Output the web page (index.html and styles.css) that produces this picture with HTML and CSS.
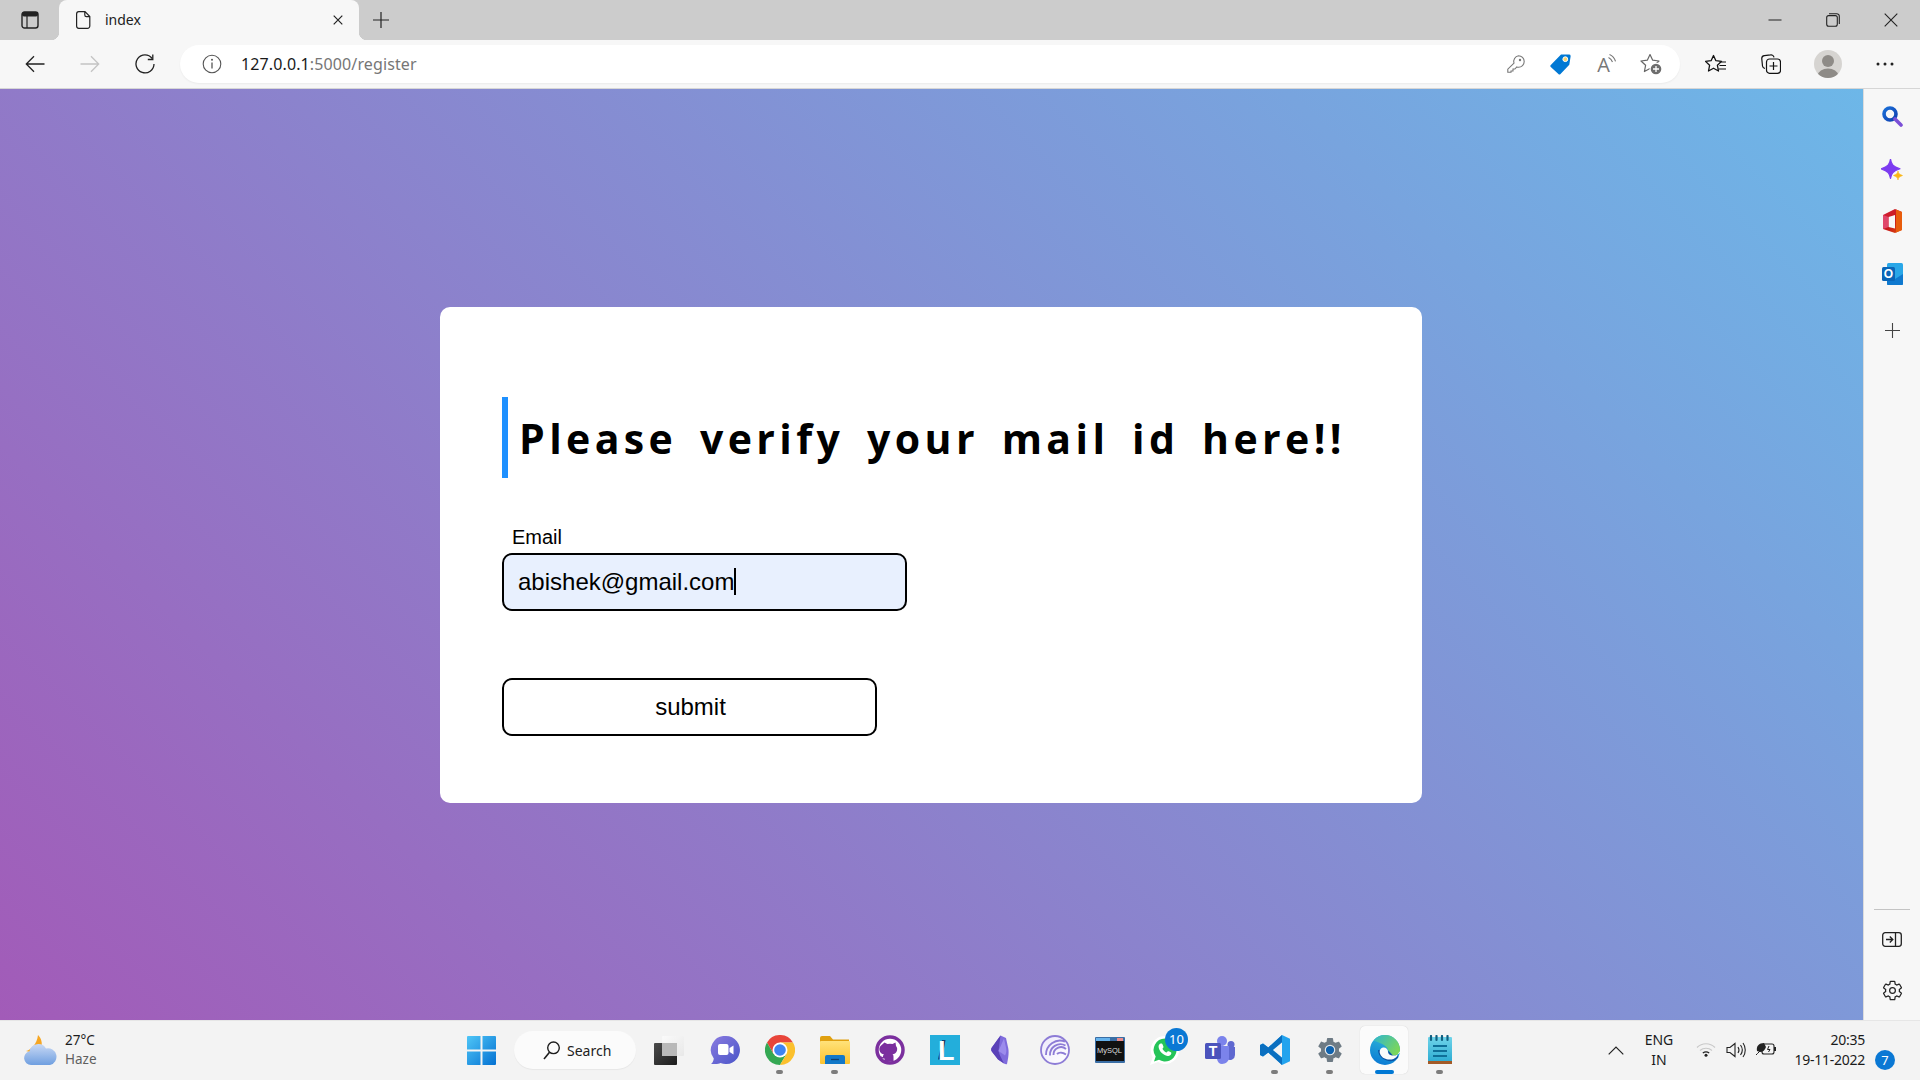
FILE: index.html
```html
<!DOCTYPE html>
<html lang="en">
<head>
<meta charset="utf-8">
<title>index</title>
<link rel="stylesheet" href="styles.css">
</head>
<body>
<div class="window">
  <header class="tabstrip">
    <div class="tab-toggle">
      <svg width="18" height="18" viewBox="0 0 18 18"><rect x="1" y="1" width="16" height="16" rx="2.5" fill="none" stroke="#222" stroke-width="1.4"/><rect x="1" y="1" width="16" height="4.5" rx="2" fill="#222"/><path d="M6 5v12" stroke="#222" stroke-width="1.2"/></svg>
    </div>
    <div class="tab">
      <svg class="tab-file" width="16" height="18" viewBox="0 0 16 18"><path d="M3 .7h6.2L14 5.500V15a2.300 2.300 0 0 1-2.300 2.300H3A2.300 2.300 0 0 1 .8 15V3A2.300 2.300 0 0 1 3 .7zM9 .9V4a1.600 1.600 0 0 0 1.600 1.600H14" transform="translate(.8 0)" fill="none" stroke="#222" stroke-width="1.2"/></svg>
      <span class="tab-title">index</span>
      <svg class="tab-close" width="10" height="10" viewBox="0 0 10 10"><path d="M.7.7l8.600 8.600M9.300.7L.7 9.300" stroke="#222" stroke-width="1.2"/></svg>
    </div>
    <div class="new-tab">
      <svg width="18" height="18" viewBox="0 0 18 18"><path d="M9 1v16M1 9h16" stroke="#222" stroke-width="1.2"/></svg>
    </div>
    <div class="win-controls">
      <div class="win-btn"><svg width="14" height="14" viewBox="0 0 14 14"><path d="M.5 7h13" stroke="#222" stroke-width="1"/></svg></div>
      <div class="win-btn"><svg width="14" height="14" viewBox="0 0 14 14"><rect x=".7" y="2.600" width="10.600" height="10.600" rx="2" fill="none" stroke="#222" stroke-width="1.100"/><path d="M3 .7h7.600a2.600 2.600 0 0 1 2.700 2.700V11" fill="none" stroke="#222" stroke-width="1.100"/></svg></div>
      <div class="win-btn"><svg width="14" height="14" viewBox="0 0 14 14"><path d="M.7.7l12.600 12.600M13.300.7L.7 13.300" stroke="#222" stroke-width="1.100"/></svg></div>
    </div>
  </header>

  <nav class="toolbar">
    <div class="nav-btn"><svg width="20" height="18" viewBox="0 0 20 18"><path d="M19.500 9H1.500M9 1.200L1.300 9 9 16.800" fill="none" stroke="#222" stroke-width="1.300"/></svg></div>
    <div class="nav-btn"><svg width="20" height="18" viewBox="0 0 20 18"><path d="M.5 9h18M11 1.200L18.700 9 11 16.800" fill="none" stroke="#c4c4c4" stroke-width="1.300"/></svg></div>
    <div class="nav-btn"><svg width="20" height="20" viewBox="0 0 20 20"><path d="M17.200 4.500A9 9 0 1 0 19 10" fill="none" stroke="#222" stroke-width="1.300"/><path d="M17.800.5v5h-5" fill="none" stroke="#222" stroke-width="1.300"/></svg></div>
    <div class="address">
      <svg class="addr-info" width="20" height="20" viewBox="0 0 20 20"><circle cx="10" cy="10" r="8.800" fill="none" stroke="#555" stroke-width="1.100"/><path d="M10 8.500v6" stroke="#555" stroke-width="1.300"/><circle cx="10" cy="5.800" r="1" fill="#555"/></svg>
      <div class="addr-url"><span class="url-host">127.0.0.1</span>:5000/register</div>
      <div class="addr-icons">
        <div class="addr-slot"><svg width="18" height="18" viewBox="0 0 18 18"><path d="M11.500.8a5.700 5.700 0 0 1 0 11.400c-.6 0-1.200-.1-1.700-.3L7.900 14H6v2H4v1.300H.8v-3.100l6.200-6A5.700 5.700 0 0 1 11.500.8z" fill="none" stroke="#777" stroke-width="1.100"/><circle cx="13" cy="5" r="1.200" fill="#777"/></svg></div>
        <div class="addr-slot"><svg width="21" height="21" viewBox="0 0 21 21"><path d="M11 .6h8a1.600 1.600 0 0 1 1.600 1.800l-1.300 8.300-8.800 9.400a1.500 1.500 0 0 1-2.100 0L.8 13a1.500 1.500 0 0 1 0-2.100z" fill="#0078d4"/><circle cx="15.300" cy="5.200" r="2.400" fill="#f7d774" stroke="#fff" stroke-width="1"/></svg></div>
        <div class="addr-slot"><span class="read-a">A</span><svg class="read-waves" width="8" height="12" viewBox="0 0 8 12"><path d="M.5 3.500c2 .9 3.300 2.500 4 4.500M1.500.5c3 1.200 5 3.500 6 6.800" fill="none" stroke="#777" stroke-width="1.100"/></svg></div>
        <div class="addr-slot"><svg width="22" height="22" viewBox="0 0 22 22"><path d="M10 1.500l2.700 5.700 6.300.8-4.600 4.300 1.200 6.200-5.600-3-5.600 3 1.200-6.200L1 8l6.300-.8z" fill="none" stroke="#666" stroke-width="1.200" stroke-linejoin="round"/><circle cx="16" cy="16" r="6.500" fill="#fff"/><circle cx="16" cy="16" r="5.300" fill="#6d6d6d"/><path d="M16 13v6M13 16h6" stroke="#fff" stroke-width="1.300"/></svg></div>
      </div>
    </div>
    <div class="tool-right">
      <div class="tool-slot"><svg width="21" height="20" viewBox="0 0 21 20"><path d="M8.500 1.500l2.400 5.200 5.600.7-4.100 3.900 1.100 5.700-5-2.800-5 2.800 1.100-5.700L.5 7.400l5.600-.7z" fill="none" stroke="#111" stroke-width="1.300" stroke-linejoin="round"/><path d="M14.500 8H21M14.500 11.500H21M13.500 15H21" stroke="#111" stroke-width="1.200"/></svg></div>
      <div class="tool-slot"><svg width="20" height="20" viewBox="0 0 20 20"><path d="M4 14.500A3 3 0 0 1 1.500 12L.8 5a3 3 0 0 1 2.600-3.300L9.500.9A3 3 0 0 1 13 3.300" fill="none" stroke="#111" stroke-width="1.200"/><rect x="5.500" y="5" width="14" height="14.300" rx="3" fill="#f7f7f7" stroke="#111" stroke-width="1.200"/><path d="M12.500 8v8M8.500 12h8" stroke="#111" stroke-width="1.200"/></svg></div>
      <div class="tool-slot tool-avatar"><svg width="28" height="28" viewBox="0 0 28 28"><defs><clipPath id="av"><circle cx="14" cy="14" r="14"/></clipPath></defs><circle cx="14" cy="14" r="14" fill="#d6d4d1"/><g clip-path="url(#av)" fill="#8e8b87"><circle cx="14" cy="11" r="6"/><ellipse cx="14" cy="25" rx="10" ry="6.500"/></g></svg></div>
      <div class="tool-slot tool-more"><svg width="18" height="4" viewBox="0 0 18 4"><circle cx="2" cy="2" r="1.500" fill="#222"/><circle cx="9" cy="2" r="1.500" fill="#222"/><circle cx="16" cy="2" r="1.500" fill="#222"/></svg></div>
    </div>
  </nav>

  <div class="body-row">
    <main class="page">
      <section class="card">
        <h1 class="title">Please verify your mail id here!!</h1>
        <label class="field-label">Email</label>
        <div class="field"><span>abishek@gmail.com</span><i class="caret"></i></div>
        <button class="submit" type="button">submit</button>
      </section>
    </main>
    <aside class="sidebar">
      <div class="side-slot"><svg width="21" height="21" viewBox="0 0 21 21"><defs><linearGradient id="sg" x1="0" y1="0" x2="1" y2="1"><stop offset="0" stop-color="#1a6fd8"/><stop offset="1" stop-color="#0f3fb0"/></linearGradient></defs><circle cx="8" cy="8" r="6" fill="none" stroke="url(#sg)" stroke-width="3.600"/><path d="M13 13l6 6" stroke="#7b4fd6" stroke-width="3.600" stroke-linecap="round"/></svg></div>
      <div class="side-slot"><svg width="22" height="22" viewBox="0 0 22 22"><path d="M9.500 0c.8 5.500 2.500 7.500 9.500 9.800-7 2.300-8.700 4.300-9.500 9.700C8.700 14.100 7 12.100 0 9.800 7 7.500 8.700 5.500 9.500 0z" fill="#7c3bf0" stroke="#7c3bf0" stroke-width="1.200" stroke-linejoin="round"/><path d="M17 12c.4 2.400 1.200 3.200 4.500 4.500-3.300 1.300-4.100 2.100-4.500 4.500-.4-2.400-1.200-3.200-4.500-4.500 3.300-1.300 4.100-2.100 4.500-4.500z" fill="#fab615" stroke="#fab615" stroke-width=".6"/></svg></div>
      <div class="side-slot side-office"><svg width="21" height="24" viewBox="0 0 21 24"><defs><linearGradient id="of" x1="0" y1="0" x2="1" y2="1"><stop offset="0" stop-color="#d6203c"/><stop offset=".55" stop-color="#c81a1a"/><stop offset="1" stop-color="#e0540a"/></linearGradient></defs><path d="M1 6L13 0l7 3v18l-7 3-12-4z" fill="url(#of)"/><path d="M14 .5l6 2.500v18l-6 2.500z" fill="#e85c0c"/><path d="M6.500 8l6.500-2v13.500L6.500 18z" fill="#f7f7f7"/><path d="M1 6l5.500 2v10L1 20z" fill="#e0476b"/></svg></div>
      <div class="side-slot side-outlook"><svg width="21" height="22" viewBox="0 0 21 22"><rect x="5" y="0" width="16" height="22" rx="1.500" fill="#29a7e8"/><path d="M5 11l8 5 8-5v10a1 1 0 0 1-1 1H6a1 1 0 0 1-1-1z" fill="#0f79cf"/><rect x="0" y="4" width="13" height="14" rx="1.500" fill="#0a66b8"/><text x="6.500" y="15.300" class="svg-o">O</text></svg></div>
      <div class="side-slot"><svg width="15" height="15" viewBox="0 0 15 15"><path d="M7.500 0v15M0 7.500h15" stroke="#444" stroke-width="1.100"/></svg></div>
      <div class="side-bottom">
        <div class="side-line"></div>
        <div class="side-slot side-panel"><svg width="20" height="15" viewBox="0 0 20 15"><rect x=".7" y=".7" width="18.600" height="13.600" rx="2.500" fill="none" stroke="#222" stroke-width="1.300"/><path d="M13.500 1v13" stroke="#222" stroke-width="1.300"/><path d="M4 7.500h6.500M7.800 4.500l3 3-3 3" fill="none" stroke="#222" stroke-width="1.300"/></svg></div>
        <div class="side-slot side-gear"><svg width="23" height="23" viewBox="0 0 24 24"><path d="M19.140 12.940c.04-.3.060-.61.060-.94 0-.32-.02-.64-.07-.94l2.030-1.580c.18-.14.230-.41.120-.61l-1.920-3.320c-.12-.22-.37-.29-.59-.22l-2.390.96c-.5-.38-1.030-.7-1.620-.94l-.36-2.540c-.04-.24-.24-.41-.48-.41h-3.840c-.24 0-.43.170-.47.410l-.36 2.540c-.59.240-1.130.570-1.620.940l-2.390-.960c-.22-.080-.47 0-.59.220L2.740 8.870c-.12.210-.08.470.12.610l2.030 1.580c-.05.300-.09.630-.09.940s.02.640.07.940l-2.030 1.580c-.18.140-.23.410-.12.610l1.920 3.320c.12.220.37.290.59.220l2.390-.96c.5.380 1.030.7 1.620.94l.36 2.540c.05.240.24.410.48.410h3.840c.24 0 .44-.17.47-.41l.36-2.540c.59-.24 1.130-.56 1.620-.94l2.390.96c.22.080.47 0 .59-.22l1.920-3.320c.12-.22.070-.47-.12-.61z" fill="none" stroke="#222" stroke-width="1.300"/><circle cx="12" cy="12" r="3" fill="none" stroke="#222" stroke-width="1.300"/></svg></div>
      </div>
    </aside>
  </div>

  <footer class="taskbar">
    <div class="weather">
      <svg width="36" height="32" viewBox="0 0 36 32"><defs><linearGradient id="cl" x1="0" y1="0" x2="0" y2="1"><stop offset="0" stop-color="#c9d9f5"/><stop offset="1" stop-color="#6f9fe0"/></linearGradient></defs><path d="M16 1c3 3 5 8 3 13-3 4-9 5-15 3C9 16 15 10 16 1z" fill="#f6a623"/><path d="M9 31a7 7 0 0 1-1.500-13.800A9 9 0 0 1 24 14.500 8.300 8.300 0 0 1 28 31z" fill="url(#cl)"/></svg>
      <div class="weather-text"><div>27°C</div><div class="weather-sub">Haze</div></div>
    </div>
    <div class="start">
      <svg width="29" height="29" viewBox="0 0 29 29"><defs><linearGradient id="wn" x1="0" y1="0" x2="1" y2="1"><stop offset="0" stop-color="#4fc6f7"/><stop offset="1" stop-color="#0471d2"/></linearGradient></defs><path d="M0 1a1 1 0 0 1 1-1h12.500v13.500H0zM15.500 0H28a1 1 0 0 1 1 1v12.500H15.500zM0 15.500h13.500V29H1a1 1 0 0 1-1-1zM15.500 15.500H29V28a1 1 0 0 1-1 1H15.500z" fill="url(#wn)"/></svg>
    </div>
    <div class="tb-search">
      <svg width="17" height="19" viewBox="0 0 17 19"><circle cx="10.500" cy="6.800" r="5.800" fill="none" stroke="#1d1d1d" stroke-width="1.400"/><path d="M6.500 11.200L1 18" stroke="#1d1d1d" stroke-width="1.600"/></svg>
      <span>Search</span>
    </div>
    <div class="taskview">
      <svg width="30" height="29" viewBox="0 0 30 29"><defs><linearGradient id="tv" x1="0" y1="0" x2="1" y2="1"><stop offset="0" stop-color="#4a4a4a"/><stop offset="1" stop-color="#1c1c1c"/></linearGradient><linearGradient id="tw" x1="0" y1="0" x2="1" y2="1"><stop offset="0" stop-color="#fafafa"/><stop offset="1" stop-color="#e8e8e8"/></linearGradient></defs><rect x="0" y="7" width="23" height="22" rx="1" fill="url(#tv)"/><rect x="8" y="0" width="22" height="20" rx="1" fill="url(#tw)"/><rect x="8" y="7" width="15" height="13" fill="#b9b9b9"/></svg>
    </div>
    <div class="apps">
      <div class="app"><svg width="30" height="28" viewBox="0 0 30 28"><defs><linearGradient id="ch" x1="0" y1="0" x2="1" y2="1"><stop offset="0" stop-color="#8a7be0"/><stop offset="1" stop-color="#4a55c8"/></linearGradient></defs><path d="M16 0a14 14 0 1 1-5.500 26.900C8 28 3.500 28.300 1 28c1.700-1.200 2.600-3.300 2.800-5.500A14 14 0 0 1 16 0z" fill="url(#ch)"/><rect x="8" y="8" width="10.500" height="11" rx="2" fill="#fff"/><path d="M19.500 12l4-2.500v9l-4-2.500z" fill="#fff"/></svg></div>
      <div class="app run"><svg width="30" height="30" viewBox="0 0 30 30"><path d="M2 7.500A15 15 0 0 1 28 7.500H15L8.500 19z" fill="#e8453a"/><path d="M2 7.500A15 15 0 0 0 15 30l6.500-11h-13z" fill="#34a853"/><path d="M28 7.500A15 15 0 0 1 15 30l6.500-11L15 7.500z" fill="#fbc02d"/><circle cx="15" cy="15" r="7.500" fill="#fff"/><circle cx="15" cy="15" r="5.800" fill="#3f84f2"/></svg></div>
      <div class="app run"><svg width="30" height="28" viewBox="0 0 30 28"><defs><linearGradient id="fl" x1="0" y1="0" x2="0" y2="1"><stop offset="0" stop-color="#ffe27a"/><stop offset="1" stop-color="#fcc22e"/></linearGradient></defs><path d="M0 2a2 2 0 0 1 2-2h8l3 3.500h16v6H0z" fill="#e0a010"/><rect x="0" y="5" width="30" height="23" rx="1" fill="url(#fl)"/><path d="M5 28v-7a2 2 0 0 1 2-2h16a2 2 0 0 1 2 2v7z" fill="#1278c8"/><path d="M11 23.500h8" stroke="#0d3f70" stroke-width="1.300"/></svg></div>
      <div class="app"><svg width="30" height="30" viewBox="0 0 30 30"><circle cx="15" cy="15" r="13" fill="#fff" stroke="#7b2f9e" stroke-width="3.500"/><path d="M9.500 7.500l3 1.500a9 9 0 0 1 5 0l3-1.500.5 3.500c1 1.200 1.500 2.500 1 4.500-.5 2.500-2.500 3.500-4.500 3.800.8.500 1 1.500 1 2.700v4c-3 1-6 1-9 0v-2.500c-2.500.3-3.500-.5-4.500-2.500 1 .2 2 1 3 1.300-.2-1 .2-2.300 1-3-2-.3-4-1.300-4.500-3.800-.4-2 0-3.300 1-4.500z" fill="#7b2f9e"/></svg></div>
      <div class="app"><svg width="30" height="30" viewBox="0 0 30 30"><rect width="30" height="30" fill="#23aedb"/><path d="M8 24.500L12 5h3.500l-3.500 19.500z" fill="#123a6e"/><text x="8" y="24.500" class="svg-l">L</text></svg></div>
      <div class="app"><svg width="18" height="30" viewBox="0 0 18 30"><path d="M9.500.5l5.500 2.500 2.300 10.500c.7 4 .2 9-1.300 15.500-1 .5-2 0-3-.6L7 24.500.8 16.500C-.2 15 0 13.500 1 12.300z" fill="#7f6cdc"/><path d="M9.500.5L1 12.300C0 13.500-.2 15 .8 16.500L7 24.500l6 3.900c-2-4-4.500-8-5.500-12.400z" fill="#5a41b8"/><path d="M13 3.500l2.300 10.500c.4 3-.4 5-1.300 6.500-2-2-5-3-6.500-4.500z" fill="#9c8cec"/></svg></div>
      <div class="app"><svg width="30" height="30" viewBox="0 0 30 30"><defs><linearGradient id="bt" x1="0" y1="0" x2="1" y2="1"><stop offset="0" stop-color="#ede9fb"/><stop offset="1" stop-color="#ffffff"/></linearGradient></defs><circle cx="15" cy="15" r="14" fill="url(#bt)" stroke="#8d7cd6" stroke-width="1.800"/><path d="M25 6.500A14 14 0 0 0 6 20M25.500 10.500A10.500 10.500 0 0 0 10 20.500M26 14A7.500 7.500 0 0 0 13.500 20" fill="none" stroke="#8d7cd6" stroke-width="1.900"/><path d="M17 19c2-2 6-1.500 9 .5" fill="none" stroke="#8d7cd6" stroke-width="1.900"/></svg></div>
      <div class="app"><svg width="30" height="26" viewBox="0 0 30 26"><rect width="30" height="26" rx="1" fill="#3a6ea5"/><rect x="1" y="4" width="28" height="20" fill="#111"/><rect x="1" y="1" width="14" height="3" fill="#65b2ec"/><rect x="22" y="1" width="6" height="3" fill="#e98b8b"/><text x="2" y="15.500" class="svg-my">MySQL</text></svg></div>
      <div class="app app-wa"><svg width="30" height="30" viewBox="0 0 30 30"><path d="M15 1a14 14 0 1 1-7 26.100L0 30l2.800-7.800A14 14 0 0 1 15 1z" fill="#fff"/><path d="M15 3.500a11.500 11.500 0 1 1-6 21.300l-5 1.600 1.700-4.800A11.500 11.500 0 0 1 15 3.500z" fill="#25c458"/><path d="M11 8.500c1 0 1.300.2 1.600 1.100l.8 2c.2.500 0 .9-.3 1.300l-.7.800c1 1.800 2.300 3 4.200 3.900l.9-1c.4-.5.700-.6 1.300-.3l2 1c.5.200.7.600.5 1.300-.4 1.800-2 2.700-3.700 2.400-4.700-1-8.500-4.700-9-9-.2-1.600.8-3.500 2.400-3.500z" fill="#fff"/></svg><span class="badge">10</span></div>
      <div class="app"><svg width="30" height="28" viewBox="0 0 30 28"><circle cx="26" cy="8.500" r="3.500" fill="#5f68d0"/><circle cx="17" cy="5" r="5" fill="#7b83eb"/><path d="M21 11h9v8a5 5 0 0 1-8 4z" fill="#5f68d0"/><path d="M12 10h12v12c0 3-3.500 6-7 6-2.500 0-4.500-2-5-5z" fill="#7b83eb"/><rect x="0" y="7" width="16" height="16" rx="1.500" fill="#4b53bc"/><text x="8" y="20" class="svg-t">T</text></svg></div>
      <div class="app run"><svg width="30" height="30" viewBox="0 0 30 30"><path d="M22 0l8 3.800v22.400L22 30 8.300 17.500 3 21.500l-3-1.600V10.100l3-1.600 5.300 4z" fill="#22a3ee"/><path d="M22 0L8.300 12.500 3 8.500l-3 1.600v9.800l3 1.600 5.300-4L22 30v-7.500L13 15l9-7.500z" fill="#0a6fc0"/><path d="M22 7.500L13 15l9 7.500z" fill="#f3f3f3"/></svg></div>
      <div class="app run"><svg width="30" height="30" viewBox="0 0 24 24"><path d="M19.140 12.940c.04-.3.060-.61.060-.94 0-.32-.02-.64-.07-.94l2.030-1.580c.18-.14.230-.41.120-.61l-1.920-3.320c-.12-.22-.37-.29-.59-.22l-2.390.96c-.5-.38-1.030-.7-1.620-.94l-.36-2.540c-.04-.24-.24-.41-.48-.41h-3.840c-.24 0-.43.170-.47.410l-.36 2.540c-.59.240-1.130.570-1.620.940l-2.390-.960c-.22-.080-.47 0-.59.220L2.740 8.870c-.12.210-.08.470.12.610l2.030 1.580c-.05.300-.09.630-.09.940s.02.640.07.940l-2.030 1.580c-.18.140-.23.410-.12.610l1.920 3.320c.12.220.37.290.59.220l2.390-.96c.5.380 1.030.7 1.620.94l.36 2.540c.05.240.24.410.48.410h3.840c.24 0 .44-.17.47-.41l.36-2.540c.59-.24 1.130-.56 1.620-.94l2.390.96c.22.080.47 0 .59-.22l1.920-3.320c.12-.22.070-.47-.12-.61z" fill="#6e7b85"/><circle cx="12" cy="12" r="4.200" fill="#e6eaed"/><circle cx="12" cy="12" r="3.300" fill="#0f62ae"/></svg></div>
      <div class="app run run-active"><svg width="30" height="30" viewBox="0 0 30 30"><defs><linearGradient id="eb" x1=".5" y1="0" x2=".2" y2="1"><stop offset="0" stop-color="#2fb8d8"/><stop offset="1" stop-color="#0a78d4"/></linearGradient><linearGradient id="eg" x1="0" y1="0" x2="1" y2=".6"><stop offset="0" stop-color="#2fb6cf"/><stop offset="1" stop-color="#7bd65a"/></linearGradient></defs><circle cx="15" cy="15" r="15" fill="url(#eb)"/><path d="M8 15c0 7 7 12 15 11 2-.4 4-2 5.500-4L24 17z" fill="#0c56a6"/><path d="M15 0a15 15 0 0 1 15 15c0 4-3 5.500-7 5.500L18 15C17 10.500 11 8 3.500 5.500A15 15 0 0 1 15 0z" fill="url(#eg)"/><path d="M30.500 15.500c0 3.500-4.500 5.500-8.500 5-2.500-.3-4-2-4-4 0-2.500-2.500-4.500-5-4-2.500.5-4 3-3 6 1 3.500 4.500 5.500 8 6 3.500.4 6.500-.5 8.500-2.500l2-4z" fill="#fbfbfb"/><path d="M28.500 22.500L31 31H19c4-.5 7.500-4 9.500-8.500z" fill="#fbfbfb"/></svg></div>
      <div class="app run"><svg width="26" height="30" viewBox="0 0 26 30"><defs><linearGradient id="np" x1="0" y1="0" x2="0" y2="1"><stop offset="0" stop-color="#6fd4ea"/><stop offset="1" stop-color="#27a8d0"/></linearGradient></defs><rect x="1" y="2" width="24" height="27" rx="1" fill="url(#np)"/><path d="M1 26h24v3H1z" fill="#a35b28"/><path d="M4 1v4M9.500 1v4M15 1v4M20.500 1v4" stroke="#0f5f80" stroke-width="2.200" stroke-linecap="round"/><path d="M6 11h14M6 16h14M6 21h14" stroke="#0f6f98" stroke-width="2.200"/></svg></div>
    </div>
    <div class="tray">
      <div class="tray-chevron"><svg width="16" height="9" viewBox="0 0 16 9"><path d="M.7 8.300L8 1l7.300 7.300" fill="none" stroke="#222" stroke-width="1.200"/></svg></div>
      <div class="tray-lang"><div>ENG</div><div>IN</div></div>
      <div class="tray-icons">
        <div class="tray-slot"><svg width="20" height="15" viewBox="0 0 20 15"><path d="M1 5.500c5-5 13-5 18 0" fill="none" stroke="#c9c9c9" stroke-width="1.200"/><path d="M4 8.500c3.500-3 8.500-3 12 0" fill="none" stroke="#c9c9c9" stroke-width="1.200"/><path d="M6.800 11c2-1.500 4.400-1.500 6.400 0" fill="none" stroke="#222" stroke-width="1.200"/><circle cx="10" cy="13.300" r="1.500" fill="#222"/></svg></div>
        <div class="tray-slot"><svg width="20" height="16" viewBox="0 0 20 16"><path d="M1 5.500h3L9 1.500v13l-5-4H1z" fill="none" stroke="#222" stroke-width="1.100"/><path d="M12 5c1.200 1.800 1.200 4.200 0 6M14.500 3c2.200 3 2.200 7 0 10M17 1c3 4 3 10 0 14" fill="none" stroke="#222" stroke-width="1.100"/></svg></div>
        <div class="tray-slot"><svg width="20" height="14" viewBox="0 0 20 14"><rect x="6" y="2" width="12" height="10" rx="2" fill="none" stroke="#222" stroke-width="1.100"/><rect x="18" y="5" width="2" height="4" fill="#222"/><path d="M8 1C3 1 0 4 1 9l3 1c3 0 5-2 6-5z" fill="#222"/><path d="M0 13c2-2 4-4 7-7" stroke="#222" stroke-width="1"/><path d="M13 4l-1.500 3.500H14L12.500 10" fill="none" stroke="#222" stroke-width="1"/></svg></div>
      </div>
      <div class="tray-clock"><div>20:35</div><div>19-11-2022</div></div>
      <div class="tray-notify"><span class="notify-dot">7</span></div>
    </div>
  </footer>
</div>
</body>
</html>
```

FILE: styles.css
```css
* { box-sizing: border-box; }
html, body { margin: 0; height: 100%; overflow: hidden; }
body { font-family: "Noto Sans", "Open Sans", sans-serif; color: #1b1b1b; }
svg { display: block; flex: none; }

.window { display: flex; flex-direction: column; width: 1920px; height: 1080px; }

/* tab strip */
.tabstrip { display: flex; align-items: stretch; height: 40px; background: #cccccc; flex: none; }
.tab-toggle { width: 59px; display: flex; align-items: center; justify-content: center; }
.tab { position: relative; width: 300px; display: flex; align-items: center; background: #f7f7f7; border-radius: 8px 8px 0 0; padding-left: 16px; }
.tab::before, .tab::after { content: ""; position: absolute; bottom: 0; width: 8px; height: 8px; }
.tab::before { left: -8px; background: radial-gradient(circle at 0 0, transparent 8px, #f7f7f7 8.5px); }
.tab::after { right: -8px; background: radial-gradient(circle at 100% 0, transparent 8px, #f7f7f7 8.5px); }
.tab-title { margin-left: 14px; padding-bottom: 2px; font-size: 14px; color: #222; }
.tab-close { margin-left: auto; margin-right: 16px; }
.new-tab { width: 44px; display: flex; align-items: center; justify-content: center; }
.win-controls { display: flex; margin-left: auto; }
.win-btn { width: 58px; display: flex; align-items: center; justify-content: center; }

/* toolbar */
.toolbar { display: flex; align-items: center; height: 49px; padding: 0 0 0 7px; background: #f7f7f7; border-bottom: 1px solid #d6d6d6; flex: none; }
.nav-btn { width: 55px; display: flex; justify-content: center; }
.address { display: flex; align-items: center; width: 1500px; height: 38px; margin-left: 8px; padding-left: 22px; background: #fff; border-radius: 19px; box-shadow: 0 1px 2px rgba(0,0,0,.05); }
.addr-url { margin-left: 19px; font-size: 16px; color: #767676; letter-spacing: .12px; }
.url-host { color: #1a1a1a; }
.addr-icons { display: flex; margin-left: auto; padding-right: 7px; }
.addr-slot { width: 45px; display: flex; align-items: center; justify-content: center; }
.read-a { font-family: "Open Sans", sans-serif; font-size: 20px; line-height: 24px; color: #777; margin-left: 2px; padding-top: 2px; }
.read-waves { margin: -8px 0 0 -2px; }
.tool-right { display: flex; align-items: center; margin-left: 7px; }
.tool-slot { width: 56px; display: flex; align-items: center; justify-content: center; }
.tool-avatar { padding-left: 2px; }
.tool-more { margin-left: 2px; }

/* body */
.body-row { display: flex; flex: 1; min-height: 0; }
.page { flex: 1; display: flex; align-items: center; justify-content: center; padding-right: 1px; background: linear-gradient(45deg, #a25bb8, #6db7e8); }
.card { width: 982px; height: 496px; padding: 90px 62px 0; background: #fff; border-radius: 10px; }
.title { margin: 0; height: 81px; display: flex; align-items: center; padding: 2px 0 0 11px; border-left: 6px solid #1e90ff; font-family: "Open Sans", sans-serif; font-weight: 700; font-size: 41px; letter-spacing: 4.4px; word-spacing: 7.7px; color: #000; white-space: pre; }
.field-label { display: block; margin: 48px 0 0 10px; height: 27px; font-family: "Liberation Sans", sans-serif; font-size: 20px; line-height: 23px; color: #000; }
.field { display: flex; align-items: center; width: 405px; height: 58px; padding-left: 14px; background: #e8f0fe; border: 2px solid #000; border-radius: 10px; font-family: "Liberation Sans", sans-serif; font-size: 24px; color: #000; }
.caret { width: 2px; height: 27px; background: #000; }
.submit { display: block; width: 375px; height: 58px; margin-top: 67px; padding: 0 0 0 2px; background: #fff; border: 2px solid #000; border-radius: 10px; font-family: "Liberation Sans", sans-serif; font-size: 24px; color: #000; }

/* sidebar */
.sidebar { width: 57px; display: flex; flex-direction: column; background: #f7f7f7; border-left: 1px solid #dcdcdc; flex: none; }
.side-slot { height: 54px; display: flex; align-items: center; justify-content: center; flex: none; }
.side-office { height: 48px; }
.side-outlook { height: 58px; }
.side-bottom { margin-top: auto; display: flex; flex-direction: column; }
.side-line { height: 1px; margin: 0 10px 7px 10px; background: #c4c4c4; }
.side-panel { height: 44px; }
.side-gear { height: 59px; }
.svg-o { font-family: "Liberation Sans", sans-serif; font-weight: 700; font-size: 12px; fill: #fff; text-anchor: middle; }

/* taskbar */
.taskbar { display: flex; align-items: center; height: 60px; background: #f3f3f3; box-shadow: inset 0 1px 0 #e6e6e6; flex: none; }
.weather { width: 464px; display: flex; align-items: center; gap: 7px; padding-left: 22px; }
.weather-text { font-size: 13.5px; line-height: 19.5px; color: #1d1d1d; }
.weather-sub { color: #5f5f5f; }
.start { width: 35px; display: flex; justify-content: center; }
.tb-search { display: flex; align-items: center; gap: 7px; width: 122px; height: 38px; margin-left: 15px; padding-left: 29px; background: #fbfbfb; border-radius: 19px; box-shadow: 0 1px 1px rgba(0,0,0,.05); font-size: 14px; color: #222; }
.taskview { width: 36px; margin-left: 15px; display: flex; justify-content: center; }
.apps { display: flex; margin-left: 10px; }
.app { position: relative; width: 55px; height: 60px; display: flex; align-items: center; justify-content: center; }
.run::after { content: ""; position: absolute; left: 50%; bottom: 6px; width: 7px; height: 4px; margin-left: -3.5px; border-radius: 2px; background: #7c7c7c; }
.run-active::before { content: ""; position: absolute; left: 3px; right: 4px; top: 6px; bottom: 6px; background: #fbfbfb; border-radius: 5px; box-shadow: 0 0 1px rgba(0,0,0,.2); }
.run-active svg { position: relative; }
.run-active::after { width: 19px; margin-left: -9.5px; background: #0078d4; }
.badge { position: absolute; top: 8px; left: 28px; width: 23px; height: 23px; border-radius: 50%; background: #0a78d4; color: #fff; font-size: 13px; line-height: 23px; text-align: center; }
.svg-l { font-family: "Liberation Sans", sans-serif; font-weight: 700; font-size: 27px; fill: #fff; }
.svg-my { font-family: "Liberation Sans", sans-serif; font-size: 7.5px; fill: #ddd; }
.svg-t { font-family: "Liberation Sans", sans-serif; font-weight: 700; font-size: 14px; fill: #fff; text-anchor: middle; }

.tray { display: flex; align-items: center; margin-left: auto; padding-right: 15px; font-size: 14px; line-height: 20px; color: #1b1b1b; }
.tray-chevron { width: 40px; display: flex; justify-content: center; }
.tray-lang { width: 46px; text-align: center; }
.tray-icons { display: flex; margin-left: 9px; }
.tray-slot { width: 30px; display: flex; justify-content: center; }
.tray-clock { width: 84px; text-align: right; white-space: nowrap; letter-spacing: -.25px; }
.tray-notify { width: 40px; display: flex; justify-content: center; padding-top: 19px; }
.notify-dot { width: 20px; height: 20px; border-radius: 50%; background: #0a78d4; color: #fff; font-size: 13px; line-height: 20px; text-align: center; }
```
